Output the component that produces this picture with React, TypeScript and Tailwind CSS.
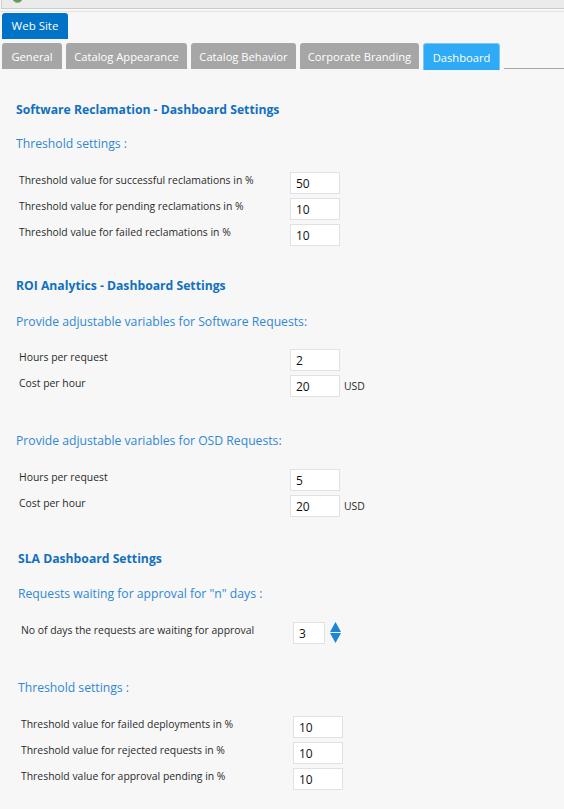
import React from "react";

const F = { fontFamily: '"Open Sans", "Noto Sans", sans-serif' };

function Input({ value, w = "w-[50px]" }: { value: string; w?: string }) {
  return (
    <div className={`${w} h-[22px] bg-white border border-[#e1e1e1] pl-[5px] text-[12px] leading-[20px] text-[#111] pt-[1px]`}>
      {value}
    </div>
  );
}

function Row({ label, value, suffix, indent = false }: { label: string; value: string; suffix?: string; indent?: boolean }) {
  return (
    <div className="flex items-start h-[22px] mb-[4px]">
      <div className={`${indent ? "w-[293px] pl-[21px]" : "w-[290px] pl-[19px]"} text-[10.4px] leading-[16px] text-[#2b2b2b]`}>
        {label}
      </div>
      <Input value={value} />
      {suffix && <div className="pl-[4px] text-[10.4px] leading-[22px] text-[#2b2b2b]">{suffix}</div>}
    </div>
  );
}

function Heading({ children, cls }: { children: React.ReactNode; cls: string }) {
  return <div className={`text-[12.2px] leading-[16px] font-bold text-[#1170bf] ${cls}`}>{children}</div>;
}

function Sub({ children, cls }: { children: React.ReactNode; cls: string }) {
  return <div className={`text-[12.2px] leading-[16px] text-[#2f88d4] ${cls}`}>{children}</div>;
}

export default function App() {
  const tabs = ["General", "Catalog Appearance", "Catalog Behavior", "Corporate Branding"];
  const widths = ["w-[60px]", "w-[121px]", "w-[105px]", "w-[119px]"];
  return (
    <div className="w-[564px] h-[809px] bg-[#f7f7f7] overflow-hidden flex flex-col" style={F}>
      <div className="h-[9px] shrink-0 bg-[#ebebeb] border-b border-[#cdcdcd] border-l border-l-[#d0d0d0] ml-[1px] relative overflow-hidden">
        <svg className="absolute left-[10px] -top-[8px]" width="11" height="11" viewBox="0 0 11 11">
          <circle cx="5.5" cy="5.5" r="5" fill="#5aa34a" stroke="#9a9a9a" strokeWidth="1" />
        </svg>
      </div>
      <div className="h-[2px] shrink-0" />
      <div className="h-[1px] shrink-0 bg-[#e4e4e4]" />
      <div className="pl-[2px] pt-[1px] flex">
        <div className="w-[66px] h-[26px] bg-[#0073c6] rounded-t-[3px] text-white text-[11.5px] leading-[26px] text-center">
          Web Site
        </div>
      </div>
      <div className="mt-[4px] flex items-end pl-[2px] gap-[4px] h-[27px] shrink-0">
        {tabs.map((t, i) => (
          <div key={t} className={`${widths[i]} h-[26px] bg-[#a6a6a6] rounded-t-[3px] text-white text-[11.2px] leading-[27px] text-center mb-[1px]`}>
            {t}
          </div>
        ))}
        <div className="w-[77px] h-[27px] bg-[#2eaaf7] border border-b-0 border-[#7cc7f5] rounded-t-[3px] text-white text-[11.2px] leading-[28px] text-center">
          Dashboard
        </div>
        <div className="flex-1 h-[1px] bg-[#a9a9a9] mb-[1px]" />
      </div>

      <Heading cls="pl-[16px] mt-[32px]">Software Reclamation - Dashboard Settings</Heading>
      <Sub cls="pl-[16px] mt-[18px]">Threshold settings :</Sub>
      <div className="mt-[20px] flex flex-col">
        <Row label="Threshold value for successful reclamations in %" value="50" />
        <Row label="Threshold value for pending reclamations in %" value="10" />
        <Row label="Threshold value for failed reclamations in %" value="10" />
      </div>

      <Heading cls="pl-[16px] mt-[28px]">ROI Analytics - Dashboard Settings</Heading>
      <Sub cls="pl-[16px] mt-[20px]">Provide adjustable variables for Software Requests:</Sub>
      <div className="mt-[19px] flex flex-col">
        <Row label="Hours per request" value="2" />
        <Row label="Cost per hour" value="20" suffix="USD" />
      </div>

      <Sub cls="pl-[16px] mt-[32px]">Provide adjustable variables for OSD Requests:</Sub>
      <div className="mt-[20px] flex flex-col">
        <Row label="Hours per request" value="5" />
        <Row label="Cost per hour" value="20" suffix="USD" />
      </div>

      <Heading cls="pl-[18px] mt-[30px]">SLA Dashboard Settings</Heading>
      <Sub cls="pl-[18px] mt-[19px]">Requests waiting for approval for "n" days :</Sub>
      <div className="mt-[20px] flex items-start h-[22px] shrink-0">
        <div className="w-[293px] pl-[21px] text-[10.4px] leading-[16px] text-[#2b2b2b]">
          No of days the requests are waiting for approval
        </div>
        <Input value="3" w="w-[32px]" />
        <svg className="ml-[5px]" width="11" height="22" viewBox="0 0 11 22">
          <polygon points="5.5,0 11,10 0,10" fill="#1a86d8" />
          <polygon points="0,11 11,11 5.5,21" fill="#1a86d8" />
        </svg>
      </div>

      <Sub cls="pl-[18px] mt-[36px]">Threshold settings :</Sub>
      <div className="mt-[20px] flex flex-col">
        <Row indent label="Threshold value for failed deployments in %" value="10" />
        <Row indent label="Threshold value for rejected requests in %" value="10" />
        <Row indent label="Threshold value for approval pending in %" value="10" />
      </div>
    </div>
  );
}
